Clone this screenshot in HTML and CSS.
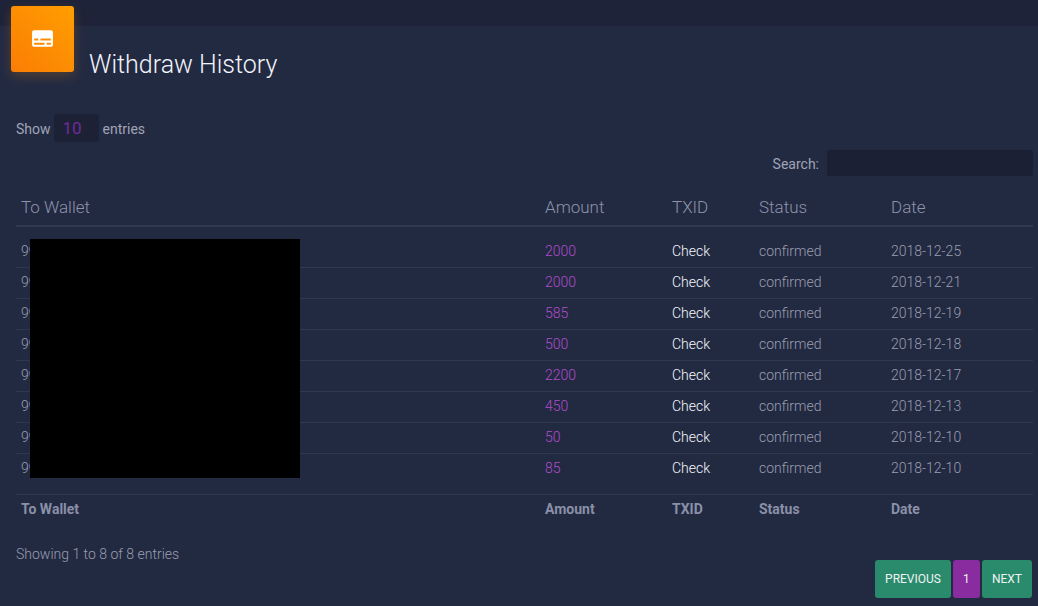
FILE: index.html
```html
<!DOCTYPE html>
<html lang="en">
<head>
<meta charset="utf-8">
<title>Withdraw History</title>
<link rel="stylesheet" href="styles.css">
</head>
<body>
<div class="topbar"></div>
<header class="header">
  <div class="badge">
    <svg class="badge-icon" viewBox="0 0 24 24" aria-hidden="true"><path fill="#fff" d="M20 4H4c-1.1 0-2 .9-2 2v12c0 1.1.9 2 2 2h16c1.1 0 2-.9 2-2V6c0-1.1-.9-2-2-2zM4 12h4v2H4v-2zm10 6H4v-2h10v2zm6 0h-4v-2h4v2zm0-4H10v-2h10v2z"/></svg>
  </div>
  <h1 class="title">Withdraw History</h1>
</header>
<main class="content">
  <div class="length"><span class="label">Show</span><span class="select">10</span><span class="label label-after">entries</span></div>
  <div class="search"><span class="label">Search:</span><span class="input"></span></div>
  <table class="table">
    <colgroup><col class="c1"><col class="c2"><col class="c3"><col class="c4"><col class="c5"></colgroup>
    <thead>
      <tr><th>To Wallet</th><th>Amount</th><th>TXID</th><th>Status</th><th>Date</th></tr>
    </thead>
    <tbody>
      <tr><td>99</td><td class="amount">2000</td><td class="check">Check</td><td>confirmed</td><td>2018-12-25</td></tr>
      <tr><td>99</td><td class="amount">2000</td><td class="check">Check</td><td>confirmed</td><td>2018-12-21</td></tr>
      <tr><td>99</td><td class="amount">585</td><td class="check">Check</td><td>confirmed</td><td>2018-12-19</td></tr>
      <tr><td>99</td><td class="amount">500</td><td class="check">Check</td><td>confirmed</td><td>2018-12-18</td></tr>
      <tr><td>99</td><td class="amount">2200</td><td class="check">Check</td><td>confirmed</td><td>2018-12-17</td></tr>
      <tr><td>99</td><td class="amount">450</td><td class="check">Check</td><td>confirmed</td><td>2018-12-13</td></tr>
      <tr><td>99</td><td class="amount">50</td><td class="check">Check</td><td>confirmed</td><td>2018-12-10</td></tr>
      <tr><td>99</td><td class="amount">85</td><td class="check">Check</td><td>confirmed</td><td>2018-12-10</td></tr>
    </tbody>
    <tfoot>
      <tr><th>To Wallet</th><th>Amount</th><th>TXID</th><th>Status</th><th>Date</th></tr>
    </tfoot>
  </table>
  <div class="info">Showing 1 to 8 of 8 entries</div>
  <nav class="pager">
    <a class="page-btn nav-btn">PREVIOUS</a>
    <a class="page-btn current">1</a>
    <a class="page-btn nav-btn">NEXT</a>
  </nav>
</main>
<div class="redaction"></div>
</body>
</html>
```

FILE: styles.css
```css
* { box-sizing: border-box; }
html, body { margin: 0; height: 100%; }
body {
  background: #222a42;
  font-family: Roboto, "Liberation Sans", sans-serif;
  font-size: 14px;
  color: #a0a4b6;
  overflow: hidden;
  position: relative;
}
.topbar { height: 26px; background: #1e2339; }
.header {
  display: flex;
  align-items: flex-end;
  margin-top: -20px;
  padding-left: 11px;
}
.badge {
  width: 63px;
  height: 66px;
  border-radius: 3px;
  background: linear-gradient(45deg, #fb7d05, #ff9e00);
  box-shadow: 0 4px 12px rgba(255, 140, 0, 0.22);
  display: flex;
  align-items: center;
  justify-content: center;
}
.badge-icon { width: 25px; height: 25px; margin-top: -2px; }
.title {
  margin: 0 0 -8px 15px;
  font-size: 25px;
  line-height: 30px;
  font-weight: 300;
  color: #f2f5fb;
}
.content { padding: 0 5px 0 16px; }
.label { padding-top: 2px; }
.label-after { margin-left: 1px; }
.length {
  display: flex;
  align-items: center;
  gap: 3px;
  height: 28px;
  margin-top: 42px;
}
.select {
  width: 45px;
  height: 28px;
  padding: 1px 0 0 9px;
  border-radius: 3px;
  background: #1d2136;
  color: #6f2b96;
  font-size: 17px;
  line-height: 27px;
}
.search {
  display: flex;
  justify-content: flex-end;
  align-items: center;
  gap: 8px;
  margin-top: 8px;
}
.input { width: 206px; height: 26px; border-radius: 2px; background: #1c2035; }
.table {
  width: 1017px;
  margin-top: 15px;
  border-collapse: separate;
  border-spacing: 0;
  table-layout: fixed;
}
.c1 { width: 524px; }
.c2 { width: 127px; }
.c3 { width: 87px; }
.c4 { width: 132px; }
.c5 { width: 147px; }
th, td { padding: 0 5px; text-align: left; }
thead th {
  height: 36px;
  padding-bottom: 2px;
  font-size: 17px;
  font-weight: 300;
  color: #8d93aa;
  border-bottom: 2px solid #2f3852;
}
td {
  height: 31px;
  padding-bottom: 2px;
  font-weight: 300;
  color: #9a9daf;
  border-bottom: 1px solid #2f3852;
}
tbody tr:first-child td { height: 41px; padding-top: 10px; }
tbody tr:last-child td { height: 40px; padding-bottom: 12px; border-bottom: 0; }
td.amount { color: #b04cc8; }
td.check { color: #f6f8fc; }
tfoot th {
  height: 30px;
  padding-bottom: 2px;
  font-weight: 700;
  color: #8a90a8;
  border-top: 1px solid #2f3852;
}
.info { margin-top: 22px; font-weight: 300; line-height: 16px; color: #9a9daf; }
.pager {
  display: flex;
  justify-content: flex-end;
  gap: 2px;
  margin-top: -2px;
  padding-right: 1px;
}
.page-btn {
  height: 38px;
  border-radius: 3px;
  font-size: 12px;
  line-height: 38px;
  text-align: center;
  color: #eef5f3;
}
.nav-btn { padding: 0 10px; background: #2a8a6c; }
.current { width: 27px; background: #892ca0; }
.redaction {
  position: absolute;
  left: 30px;
  top: 239px;
  width: 270px;
  height: 239px;
  background: #000;
}
```
